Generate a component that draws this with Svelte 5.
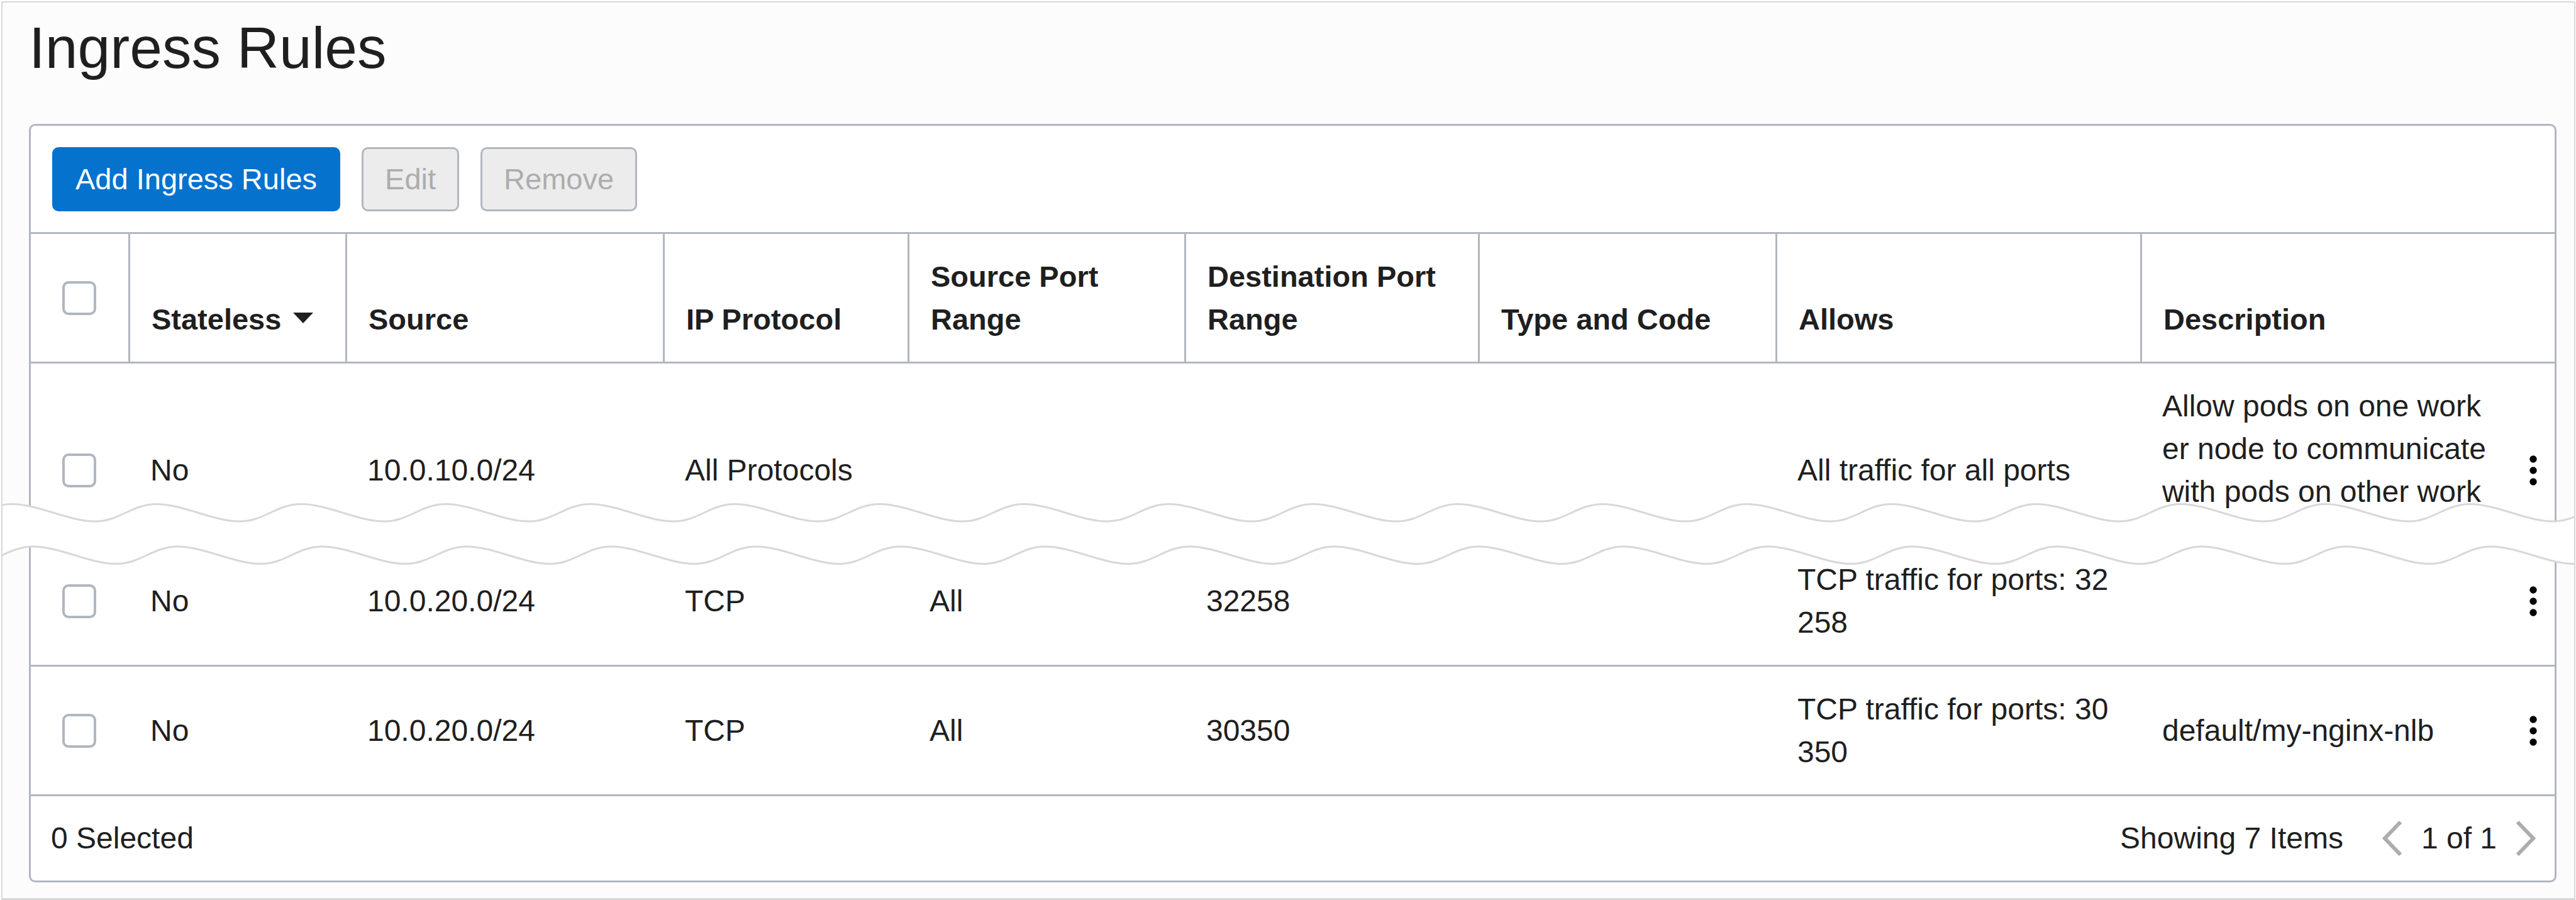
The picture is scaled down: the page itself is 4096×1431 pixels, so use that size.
<script>
  // Relative column widths; the table scales them to the panel.
  const columns = [
    { key: 'stateless', lines: ['Stateless'], width: 345, sorted: true },
    { key: 'source', lines: ['Source'], width: 505 },
    { key: 'protocol', lines: ['IP Protocol'], width: 389 },
    { key: 'sourcePort', lines: ['Source Port', 'Range'], width: 440 },
    { key: 'destPort', lines: ['Destination Port', 'Range'], width: 467 },
    { key: 'typeCode', lines: ['Type and Code'], width: 473 },
    { key: 'allows', lines: ['Allows'], width: 580 },
    { key: 'description', lines: ['Description'], width: 588 }
  ];
  const selectWidth = 158;
  const menuWidth = 68;
  const total = columns.reduce((sum, c) => sum + c.width, selectWidth + menuWidth);
  const share = (width) => `${(width / total) * 100}%`;

  const rows = [
    {
      stateless: ['No'],
      source: ['10.0.10.0/24'],
      protocol: ['All Protocols'],
      allows: ['All traffic for all ports'],
      description: ['Allow pods on one work', 'er node to communicate', 'with pods on other work'],
      torn: true
    },
    {
      stateless: ['No'],
      source: ['10.0.20.0/24'],
      protocol: ['TCP'],
      sourcePort: ['All'],
      destPort: ['32258'],
      allows: ['TCP traffic for ports: 32', '258'],
      resumed: true
    },
    {
      stateless: ['No'],
      source: ['10.0.20.0/24'],
      protocol: ['TCP'],
      sourcePort: ['All'],
      destPort: ['30350'],
      allows: ['TCP traffic for ports: 30', '350'],
      description: ['default/my-nginx-nlb']
    }
  ];

  // Wavy edges of the break between the first and the last rows.
  const period = 229.9;
  function wave(firstCrest, top) {
    const low = top + 27.5;
    let x = firstCrest - period;
    let d = `${x} ${top}`;
    for (let k = 0; k < 20; k++) {
      const trough = x + 132;
      const next = x + period;
      d += ` C${x + 41} ${top} ${trough - 41} ${low} ${trough} ${low}`;
      d += ` C${trough + 39} ${low} ${next - 39} ${top} ${next} ${top}`;
      x = next;
    }
    return d;
  }
  function reversed(firstCrest, top) {
    const low = top + 27.5;
    let x = firstCrest + period * 19;
    let d = `L${x} ${top}`;
    for (let k = 0; k < 20; k++) {
      const prev = x - period;
      const trough = prev + 132;
      d += ` C${x - 39} ${top} ${trough + 39} ${low} ${trough} ${low}`;
      d += ` C${trough - 41} ${low} ${prev + 41} ${top} ${prev} ${top}`;
      x = prev;
    }
    return d;
  }
  const upper = wave(17, 5.5);
  const lower = wave(50.5, 73);
  const gap = `M${upper} ${reversed(50.5, 73)} Z`;
</script>

{#snippet text(lines)}
  {#each lines as line, i}{#if i}<br />{/if}{line}{/each}
{/snippet}

<main class="frame">
  <h1>Ingress Rules</h1>

  <section class="panel">
    <div class="toolbar">
      <button class="btn primary" type="button">Add Ingress Rules</button>
      <button class="btn" type="button" disabled>Edit</button>
      <button class="btn" type="button" disabled>Remove</button>
    </div>

    <table>
      <colgroup>
        <col style="width: {share(selectWidth)}" />
        {#each columns as c}<col style="width: {share(c.width)}" />{/each}
        <col style="width: {share(menuWidth)}" />
      </colgroup>
      <thead>
        <tr>
          <th class="select"><input type="checkbox" aria-label="Select all rules" /></th>
          {#each columns as c}
            <th scope="col" class:open={c.key === 'description'}>
              {@render text(c.lines)}{#if c.sorted}<svg class="sort" viewBox="0 0 32 17" aria-hidden="true"><path d="M0 0H32L16 17Z" /></svg>{/if}
            </th>
          {/each}
          <th class="open"></th>
        </tr>
      </thead>
      <tbody>
        {#each rows as row, i}
          <tr class:torn={row.torn} class:resumed={row.resumed}>
            <td class="select"><input type="checkbox" aria-label="Select rule {i + 1}" /></td>
            {#each columns as c}
              <td>{@render text(row[c.key] ?? [])}</td>
            {/each}
            <td class="menu">
              <button class="icon" type="button" aria-label="Actions">
                <svg class="dots" viewBox="0 0 12 48" aria-hidden="true">
                  <circle cx="6" cy="6" r="5.7" /><circle cx="6" cy="24" r="5.7" /><circle cx="6" cy="42" r="5.7" />
                </svg>
              </button>
            </td>
          </tr>
          {#if row.torn}
            <tr class="break" aria-hidden="true">
              <td colspan="10">
                <svg viewBox="0 0 4093 106" preserveAspectRatio="none">
                  <path class="gap" d={gap} />
                  <path class="edge" d="M{upper}" />
                  <path class="edge" d="M{lower}" />
                </svg>
              </td>
            </tr>
          {/if}
        {/each}
      </tbody>
    </table>

    <footer>
      <span>0 Selected</span>
      <div class="paging">
        <span>Showing 7 Items</span>
        <nav aria-label="Pages">
          <button class="icon" type="button" aria-label="Previous page" disabled>
            <svg class="chevron" viewBox="0 0 32 56" aria-hidden="true"><path d="M29 2L4 28L29 54" /></svg>
          </button>
          <span>1 of 1</span>
          <button class="icon" type="button" aria-label="Next page" disabled>
            <svg class="chevron" viewBox="0 0 32 56" aria-hidden="true"><path d="M3 2L28 28L3 54" /></svg>
          </button>
        </nav>
      </div>
    </footer>
  </section>
</main>

<style>
  :global(body) {
    background: #fff;
  }

  .frame {
    box-sizing: border-box;
    min-height: calc(100vh - 2px);
    margin: 2px 1px 0 2px;
    padding: 16px 28px 24px 42px;
    border: 2px solid #d8d8d8;
    border-bottom-width: 3px;
    background: #fcfcfc;
    color: #1f1f1f;
    font: 48px/68px 'Liberation Sans', Arial, sans-serif;
    overflow: hidden;
  }

  h1 {
    margin: 0 0 65px;
    font-size: 93px;
    line-height: 112px;
    font-weight: 400;
  }

  .panel {
    border: 3px solid #b1b7c0;
    border-radius: 10px;
    background: #fff;
  }

  .toolbar {
    display: flex;
    gap: 34px;
    padding: 34px 34px 33px;
    border-bottom: 3px solid #b1b7c0;
  }

  .btn {
    box-sizing: border-box;
    height: 102px;
    padding: 0 34px;
    border: 3px solid #b1b7c0;
    border-radius: 10px;
    background: #ececec;
    color: #adadad;
    font: inherit;
    font-size: 47px;
  }

  .primary {
    border-color: #0572ce;
    background: #0572ce;
    color: #fff;
  }

  table {
    width: 100%;
    table-layout: fixed;
    border-collapse: separate;
    border-spacing: 0;
  }

  th,
  td {
    padding: 34px 0 33px 32px;
    border-bottom: 3px solid #b1b7c0;
    text-align: left;
    white-space: nowrap;
  }

  th {
    padding-left: 34px;
    border-right: 3px solid #b1b7c0;
    font-size: 47px;
    font-weight: 700;
    vertical-align: bottom;
  }

  td {
    vertical-align: middle;
  }

  th.open {
    border-right: 0;
  }

  .select {
    padding-left: 0;
    text-align: center;
    vertical-align: middle;
  }

  td.select {
    padding-right: 3px;
  }

  .menu {
    padding-left: 0;
    text-align: center;
  }

  input {
    display: block;
    appearance: none;
    box-sizing: border-box;
    width: 54px;
    height: 54px;
    margin: 0 auto;
    border: 4px solid #b1b7c0;
    border-radius: 10px;
    background: #fff;
  }

  .sort {
    width: 32px;
    height: 17px;
    margin: 0 0 10px 19px;
    fill: #1f1f1f;
  }

  .torn td {
    height: 272px;
    padding-bottom: 0;
    border-bottom: 0;
  }

  .torn td:nth-last-child(2) {
    vertical-align: top;
  }

  .resumed td {
    padding-top: 4px;
  }

  .break td {
    position: relative;
    height: 0;
    padding: 0;
    border: 0;
  }

  .break svg {
    position: absolute;
    top: -88px;
    left: -47px;
    width: calc(100% + 80px);
    height: 106px;
  }

  .gap {
    fill: #fff;
  }

  .edge {
    fill: none;
    stroke: #d8d8d8;
    stroke-width: 3;
  }

  .icon {
    padding: 0;
    border: 0;
    background: none;
  }

  .icon svg {
    display: block;
  }

  .dots {
    width: 12px;
    height: 48px;
    fill: #000;
  }

  .menu .icon {
    display: block;
    margin: 0 auto;
  }

  .chevron {
    width: 32px;
    height: 56px;
    fill: none;
    stroke: #adadad;
    stroke-width: 6;
  }

  footer {
    display: flex;
    justify-content: space-between;
    align-items: center;
    padding: 33px 30px 33px 32px;
  }

  .paging {
    display: flex;
    align-items: center;
    gap: 62px;
  }

  nav {
    display: flex;
    align-items: center;
    gap: 30px;
  }
</style>
